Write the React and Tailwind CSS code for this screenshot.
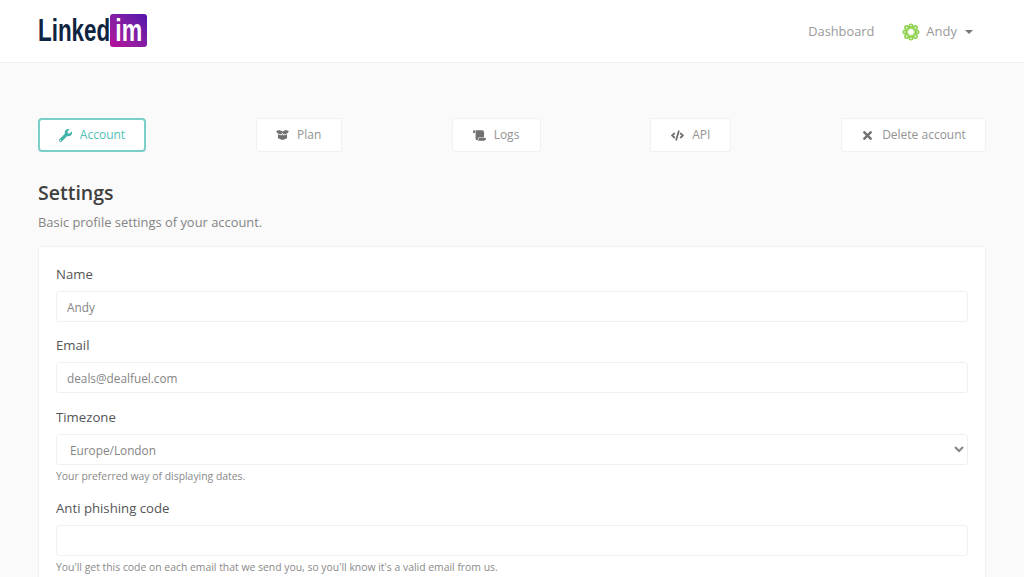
import React from 'react';
import { FaWrench, FaScroll, FaCode, FaTimes } from 'react-icons/fa';

const Avatar = () => (
  <svg width="18" height="18" viewBox="0 0 18 18" className="shrink-0">
    <g fill="#8fd14f">
      <circle cx="9" cy="3" r="2.5" />
      <circle cx="9" cy="15" r="2.5" />
      <circle cx="3" cy="9" r="2.5" />
      <circle cx="15" cy="9" r="2.5" />
      <circle cx="4.6" cy="4.6" r="2.5" />
      <circle cx="13.4" cy="4.6" r="2.5" />
      <circle cx="4.6" cy="13.4" r="2.5" />
      <circle cx="13.4" cy="13.4" r="2.5" />
    </g>
    <circle cx="9" cy="9" r="3.6" fill="none" stroke="#9bd85f" strokeWidth="1.4" />
    <g fill="#eef9e2">
      <circle cx="9" cy="6.2" r="0.8" />
      <circle cx="9" cy="11.8" r="0.8" />
      <circle cx="6.2" cy="9" r="0.8" />
      <circle cx="11.8" cy="9" r="0.8" />
      <circle cx="4.6" cy="4.6" r="0.9" />
      <circle cx="13.4" cy="4.6" r="0.9" />
      <circle cx="4.6" cy="13.4" r="0.9" />
      <circle cx="13.4" cy="13.4" r="0.9" />
      <circle cx="9" cy="2.6" r="0.8" />
      <circle cx="9" cy="15.4" r="0.8" />
      <circle cx="2.6" cy="9" r="0.8" />
      <circle cx="15.4" cy="9" r="0.8" />
    </g>
  </svg>
);

// open box with flaps, the plan tab's icon
const PlanIcon = ({ className }) => (
  <svg viewBox="0 0 14 11" width="13" height="10" fill="currentColor" className={className}>
    <path d="M0 1.2 3.4 0 7 1.6 10.6 0 14 1.2 12.6 3.6 8.6 5 7 3 5.4 5 1.4 3.6Z" />
    <path d="M2 4.6 5.8 6 7 4.4 8.2 6 12 4.6V9.2L7 11 2 9.2Z" />
  </svg>
);

const Tab = ({ icon: Icon, label, active, className }) => (
  <a
    className={
      'flex h-[34px] items-center justify-center gap-[8px] bg-white text-[12px] ' +
      (active
        ? 'rounded-[4px] border-2 border-[#7ad0c9] text-[#4fbfb6] '
        : 'rounded-[3px] border border-[#f1f1f1] text-[#939393] ') +
      className
    }
  >
    <Icon className={'text-[13px] ' + (active ? 'text-[#3fb3aa]' : 'text-[#707070]')} />
    {label}
  </a>
);

const Label = ({ children }) => (
  <label className="mb-[6px] block text-[13.2px] leading-[21px] text-[#555555]">{children}</label>
);

const Hint = ({ children }) => (
  <p className="mt-[3px] text-[10.4px] leading-[17px] text-[#8a8a8a]">{children}</p>
);

const Field = ({ label, value, hint }) => (
  <div className="mb-[13px]">
    <Label>{label}</Label>
    <input
      readOnly
      value={value}
      className="block h-[31px] w-full rounded-[3px] border border-[#f0f0f0] bg-white px-[10px] text-[11.8px] text-[#858585] outline-none"
    />
    {hint && <Hint>{hint}</Hint>}
  </div>
);

export default function App() {
  return (
    <div className="h-screen overflow-hidden bg-[#fafafa] font-['Open_Sans',sans-serif]">
      <header className="flex h-[63px] items-center justify-between border-b border-[#f1f1f1] bg-white pl-[38px] pr-[51px]">
        <div className="mb-[2px] flex items-center font-['Liberation_Sans',sans-serif] font-bold">
          <span className="w-[72px] origin-left scale-x-[0.7] whitespace-nowrap text-[32px] leading-none text-[#0f2440]">
            Linked
          </span>
          <span className="flex h-[33px] w-[37px] items-center justify-center rounded-[3px] bg-gradient-to-tr from-[#b8069a] to-[#5410ac] text-white">
            <span className="scale-x-[0.72] text-[32px] leading-none">im</span>
          </span>
        </div>
        <nav className="mt-[1px] flex items-center text-[#999999]">
          <a className="mr-[28px] text-[12.8px]">Dashboard</a>
          <Avatar />
          <span className="ml-[6px] text-[13px]">Andy</span>
          <span className="ml-[8px] h-0 w-0 border-x-[4px] border-t-[4px] border-x-transparent border-t-[#777777]" />
        </nav>
      </header>

      <main className="px-[38px] pt-[55px]">
        <div className="flex items-center justify-between">
          <Tab icon={FaWrench} label="Account" active className="w-[108px]" />
          <Tab icon={PlanIcon} label="Plan" className="w-[86px]" />
          <Tab icon={FaScroll} label="Logs" className="w-[89px]" />
          <Tab icon={FaCode} label="API" className="w-[81px]" />
          <Tab icon={FaTimes} label="Delete account" className="w-[145px]" />
        </div>

        <h1 className="mt-[27px] text-[19.5px] font-semibold leading-[28px] text-[#3f3f3f]">Settings</h1>
        <p className="mt-[5px] text-[12.9px] leading-[20px] text-[#848484]">Basic profile settings of your account.</p>

        <section className="mt-[14px] rounded-[3px] border border-[#f1f1f1] bg-white px-[17px] pt-[17px] pb-[40px]">
          <Field label="Name" value="Andy" />
          <Field label="Email" value="deals@dealfuel.com" />
          <div className="mb-[13px] pt-[1px]">
            <Label>Timezone</Label>
            <select className="block h-[31px] w-full rounded-[3px] border border-[#f0f0f0] bg-white px-[9px] text-[11.8px] text-[#858585] outline-none">
              <option>Europe/London</option>
            </select>
            <Hint>Your preferred way of displaying dates.</Hint>
          </div>
          <Field
            label="Anti phishing code"
            value=""
            hint="You'll get this code on each email that we send you, so you'll know it's a valid email from us."
          />
        </section>
      </main>
    </div>
  );
}
